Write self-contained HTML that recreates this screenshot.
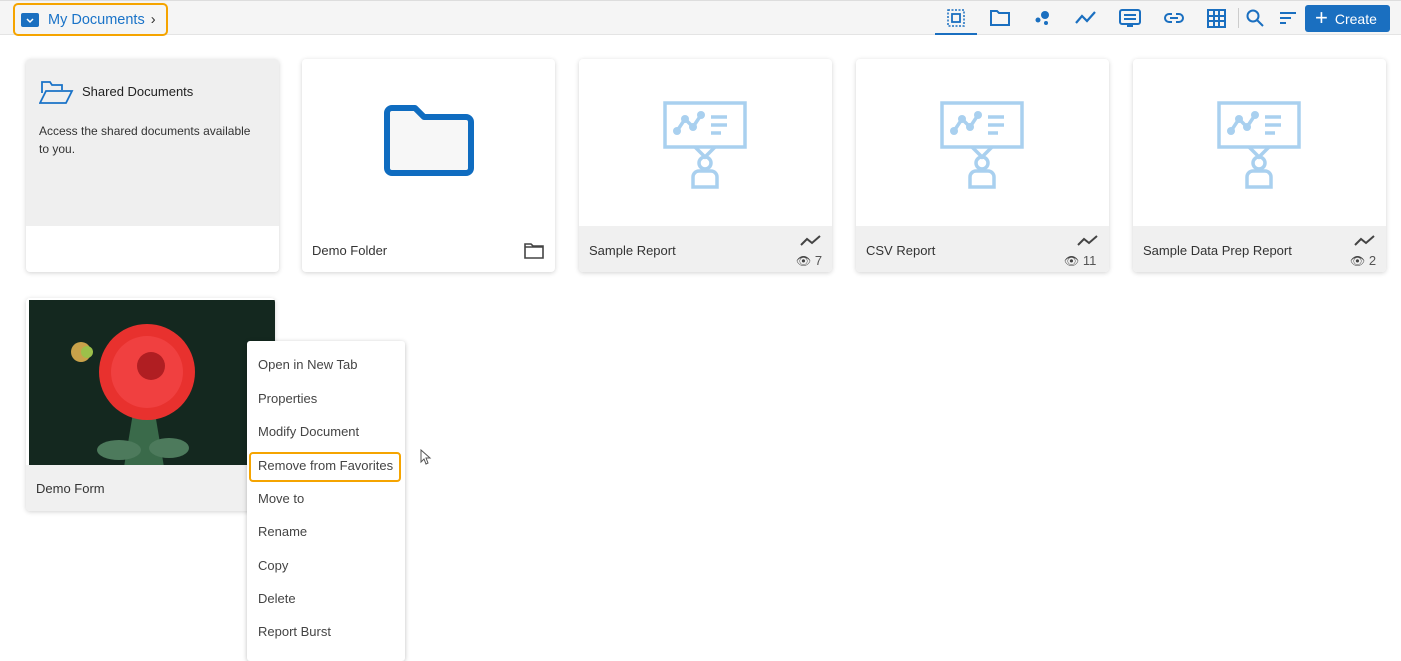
<!DOCTYPE html>
<html><head><meta charset="utf-8"><style>
*{box-sizing:border-box;margin:0;padding:0}
body{width:1401px;height:655px;overflow:hidden;background:#fff;font-family:"Liberation Sans",sans-serif;color:#333;position:relative;font-size:13px}
.top{position:absolute;left:0;top:0;width:1401px;height:35px;background:#f5f5f5;border-bottom:1px solid #e4e4e4;border-top:1px solid #ddd}
.bc{position:absolute;left:13px;top:2px;width:155px;height:33px;border:2.5px solid #f5a400;border-radius:5px;display:flex;align-items:center;padding-left:6px;color:#1a73c8;font-size:14.5px}
.ic{position:absolute;top:8px}
.card{position:absolute;background:#fff;border-radius:4px;box-shadow:0 1px 5px rgba(0,0,0,.18);overflow:hidden}
.foot{position:absolute;left:0;right:0;bottom:0;height:46px;background:#f0f0f0}
.ft{position:absolute;left:10px;top:16px;font-size:13px;color:#333}
.menu{position:absolute;left:247px;top:341px;width:158px;height:320px;background:#fff;box-shadow:0 1px 5px rgba(0,0,0,.25);border-radius:3px}
.menu div{position:absolute;left:11px;font-size:13px;color:#444}
.eye{color:#444}
</style></head><body>
<div class="top">
 <div class="bc"><svg width="18" height="16" viewBox="0 0 18 16"><rect x="0" y="1" width="18" height="14" rx="2" fill="#1a6fc0"/><path d="M6 7l3 3 3-3" stroke="#fff" stroke-width="1.5" fill="none"/></svg><span style="margin-left:9px">My Documents</span><span style="margin-left:6px;color:#333">›</span></div>
 <svg class="ic" style="left:947px" width="18" height="18" viewBox="0 0 18 18"><rect x="1" y="1" width="16" height="16" fill="none" stroke="#1a6fc0" stroke-width="1.5" stroke-dasharray="2 1.5"/><rect x="5" y="5" width="8" height="8" fill="none" stroke="#1a6fc0" stroke-width="1.8"/></svg>
 <div style="position:absolute;left:935px;top:32px;width:42px;height:2px;background:#1a6fc0"></div>
 <svg class="ic" style="left:990px" width="20" height="18" viewBox="0 0 20 18"><path d="M1 2h6l2 2h10v12H1z" fill="none" stroke="#1a6fc0" stroke-width="2"/></svg>
 <svg class="ic" style="left:1034px" width="18" height="18" viewBox="0 0 18 18"><circle cx="11" cy="6" r="4" fill="#1a6fc0"/><circle cx="4" cy="11" r="2.5" fill="#1a6fc0"/><circle cx="12" cy="14" r="2" fill="#1a6fc0"/></svg>
 <svg class="ic" style="left:1075px" width="22" height="18" viewBox="0 0 22 18"><path d="M1 14l6-7 5 5 8-9" fill="none" stroke="#1a6fc0" stroke-width="2.2"/></svg>
 <svg class="ic" style="left:1119px" width="22" height="20" viewBox="0 0 22 20"><rect x="1" y="1" width="20" height="14" rx="2" fill="none" stroke="#1a6fc0" stroke-width="2"/><path d="M5 6h12M5 10h12M8 17h6" stroke="#1a6fc0" stroke-width="2"/></svg>
 <svg class="ic" style="left:1163px" width="22" height="18" viewBox="0 0 22 18"><path d="M9 5H6a4 4 0 000 8h3M13 5h3a4 4 0 010 8h-3M7 9h8" fill="none" stroke="#1a6fc0" stroke-width="2"/></svg>
 <svg class="ic" style="left:1207px" width="19" height="19" viewBox="0 0 19 19"><rect x="1" y="1" width="17" height="17" fill="none" stroke="#1a6fc0" stroke-width="2"/><path d="M7 1v17M12 1v17M1 7h17M1 12h17" stroke="#1a6fc0" stroke-width="2"/></svg>
 <div style="position:absolute;left:1238px;top:7px;width:1px;height:20px;background:#ccc"></div>
 <svg class="ic" style="left:1246px" width="18" height="18" viewBox="0 0 18 18"><circle cx="7" cy="7" r="5.5" fill="none" stroke="#1a6fc0" stroke-width="2"/><path d="M11 11l6 6" stroke="#1a6fc0" stroke-width="2"/></svg>
 <svg class="ic" style="left:1279px;top:10px" width="18" height="14" viewBox="0 0 18 14"><path d="M1 2h16M1 7h11M1 12h6" stroke="#1a6fc0" stroke-width="2"/></svg>
 <div style="position:absolute;left:1305px;top:4px;width:85px;height:27px;background:#1a6fc0;border-radius:3px;color:#fff;font-size:14px;display:flex;align-items:center;padding-left:10px"><span style="font-size:22px;line-height:1;margin-right:7px;margin-top:-2px">+</span>Create</div>
</div>

<div class="card" style="left:26px;top:59px;width:253px;height:213px;background:#fff">
 <div style="position:absolute;left:0;top:0;right:0;height:167px;background:#efefef"></div>
 <svg style="position:absolute;left:13px;top:20px" width="36" height="26" viewBox="0 0 36 26"><path d="M3 14V3h8l2 3h10v5M1 24l6-12h26l-6 12z" fill="none" stroke="#1a73c8" stroke-width="1.8"/></svg>
 <div style="position:absolute;left:56px;top:25px;font-size:13px;color:#222">Shared Documents</div>
 <div style="position:absolute;left:13px;top:63px;width:222px;font-size:12px;line-height:18px;color:#333">Access the shared documents available to you.</div>
</div>

<div class="card" style="left:302px;top:59px;width:253px;height:213px">
 <svg style="position:absolute;left:81px;top:46px" width="92" height="72" viewBox="0 0 92 72"><path d="M4 8a5 5 0 015-5h23l9 9h42a5 5 0 015 5v46a5 5 0 01-5 5H9a5 5 0 01-5-5z" fill="#f7f7f7" stroke="#0f6cc0" stroke-width="6" stroke-linejoin="round"/></svg>
 <div class="ft" style="top:184px">Demo Folder</div>
 <svg style="position:absolute;left:222px;top:183px" width="20" height="17" viewBox="0 0 20 17"><path d="M1 2h6l2 2h10v12H1zM1 5h18" fill="none" stroke="#444" stroke-width="1.6"/></svg>
</div>

<div class="card" style="left:579px;top:59px;width:253px;height:213px"><div class="foot"></div>
 <svg style="position:absolute;left:84px;top:42px" width="84" height="88" viewBox="0 0 84 88"><g fill="none" stroke="#a9d0ef" stroke-width="3.5"><rect x="2" y="2" width="80" height="44"/><path d="M32 46l10 10 10-10"/><circle cx="42" cy="62" r="6"/><path d="M30 86V76a6 6 0 016-6h12a6 6 0 016 6v10z"/><path d="M14 30l8-12 8 8 8-12"/><path d="M48 16h16M48 24h16M48 32h10"/></g><g fill="#a9d0ef"><circle cx="14" cy="30" r="4"/><circle cx="22" cy="18" r="4"/><circle cx="30" cy="26" r="4"/><circle cx="38" cy="14" r="4"/></g></svg>
 <div class="ft" style="top:184px">Sample Report</div>
 <svg style="position:absolute;left:221px;top:176px" width="22" height="12" viewBox="0 0 22 12"><path d="M1 10l6-6 5 4 8-7" fill="none" stroke="#444" stroke-width="2"/></svg>
 <div style="position:absolute;left:217px;top:194px;font-size:13px;color:#555"><span class="eye" style="font-size:12px">&#x1F441;&#xFE0E;</span> 7</div>
</div>

<div class="card" style="left:856px;top:59px;width:253px;height:213px"><div class="foot"></div>
 <svg style="position:absolute;left:84px;top:42px" width="84" height="88" viewBox="0 0 84 88"><g fill="none" stroke="#a9d0ef" stroke-width="3.5"><rect x="2" y="2" width="80" height="44"/><path d="M32 46l10 10 10-10"/><circle cx="42" cy="62" r="6"/><path d="M30 86V76a6 6 0 016-6h12a6 6 0 016 6v10z"/><path d="M14 30l8-12 8 8 8-12"/><path d="M48 16h16M48 24h16M48 32h10"/></g><g fill="#a9d0ef"><circle cx="14" cy="30" r="4"/><circle cx="22" cy="18" r="4"/><circle cx="30" cy="26" r="4"/><circle cx="38" cy="14" r="4"/></g></svg>
 <div class="ft" style="top:184px">CSV Report</div>
 <svg style="position:absolute;left:221px;top:176px" width="22" height="12" viewBox="0 0 22 12"><path d="M1 10l6-6 5 4 8-7" fill="none" stroke="#444" stroke-width="2"/></svg>
 <div style="position:absolute;left:208px;top:194px;font-size:13px;color:#555"><span class="eye" style="font-size:12px">&#x1F441;&#xFE0E;</span> 11</div>
</div>

<div class="card" style="left:1133px;top:59px;width:253px;height:213px"><div class="foot"></div>
 <svg style="position:absolute;left:84px;top:42px" width="84" height="88" viewBox="0 0 84 88"><g fill="none" stroke="#a9d0ef" stroke-width="3.5"><rect x="2" y="2" width="80" height="44"/><path d="M32 46l10 10 10-10"/><circle cx="42" cy="62" r="6"/><path d="M30 86V76a6 6 0 016-6h12a6 6 0 016 6v10z"/><path d="M14 30l8-12 8 8 8-12"/><path d="M48 16h16M48 24h16M48 32h10"/></g><g fill="#a9d0ef"><circle cx="14" cy="30" r="4"/><circle cx="22" cy="18" r="4"/><circle cx="30" cy="26" r="4"/><circle cx="38" cy="14" r="4"/></g></svg>
 <div class="ft" style="top:184px">Sample Data Prep Report</div>
 <svg style="position:absolute;left:221px;top:176px" width="22" height="12" viewBox="0 0 22 12"><path d="M1 10l6-6 5 4 8-7" fill="none" stroke="#444" stroke-width="2"/></svg>
 <div style="position:absolute;left:217px;top:194px;font-size:13px;color:#555"><span class="eye" style="font-size:12px">&#x1F441;&#xFE0E;</span> 2</div>
</div>

<div class="card" style="left:26px;top:298px;width:249px;height:213px">
 <div style="position:absolute;left:3px;top:2px;width:246px;height:167px;background:#14281f">
  <svg width="246" height="167" viewBox="0 0 246 167">
   <path d="M95 167l10-60 20 0 10 60z" fill="#3a6a4a"/>
   <ellipse cx="90" cy="150" rx="22" ry="10" fill="#4d7a5c"/><ellipse cx="140" cy="148" rx="20" ry="10" fill="#4d7a5c"/>
   <circle cx="118" cy="72" r="48" fill="#e8312e"/>
   <circle cx="118" cy="72" r="36" fill="#f04040"/>
   <circle cx="122" cy="66" r="14" fill="#b01e22"/>
   <circle cx="52" cy="52" r="10" fill="#c9a24a"/><circle cx="58" cy="52" r="6" fill="#9cc04a"/>
  </svg>
 </div>
 <div class="foot"></div>
 <div class="ft" style="top:183px">Demo Form</div>
</div>

<div class="menu">
 <div style="top:16px">Open in New Tab</div>
 <div style="top:50px">Properties</div>
 <div style="top:83px">Modify Document</div>
 <div style="top:117px">Remove from Favorites</div>
 <div style="top:150px">Move to</div>
 <div style="top:183px">Rename</div>
 <div style="top:217px">Copy</div>
 <div style="top:250px">Delete</div>
 <div style="top:283px">Report Burst</div>
 <span style="position:absolute;left:2px;top:111px;width:152px;height:30px;border:2px solid #f5a400;border-radius:4px"></span>
</div>
<svg style="position:absolute;left:420px;top:449px" width="12" height="16" viewBox="0 0 12 16"><path d="M1 1v12l3-3 2 5 2-1-2-5h4z" fill="#fff" stroke="#555" stroke-width="1"/></svg>
</body></html>
